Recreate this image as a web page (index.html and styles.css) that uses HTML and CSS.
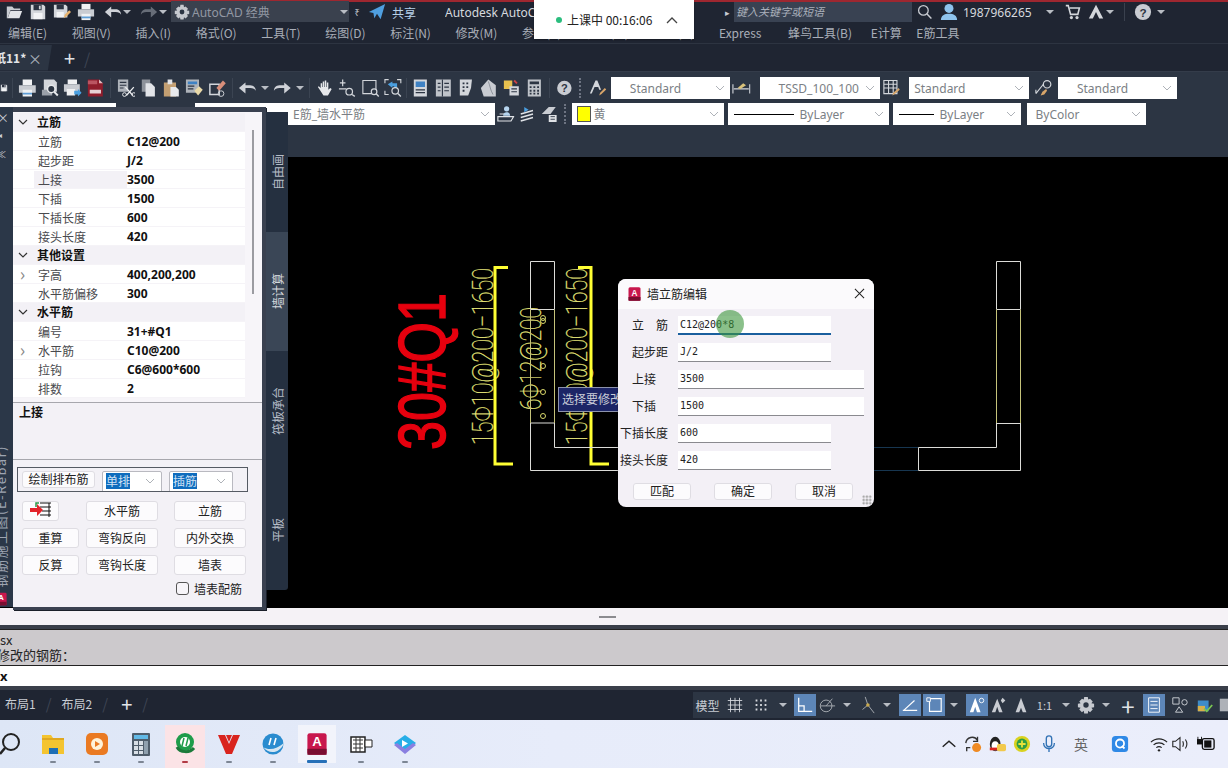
FILE: index.html
```html
<!DOCTYPE html>
<html lang="zh">
<head>
<meta charset="utf-8">
<title>AutoCAD</title>
<link rel="stylesheet" href="styles.css">
</head>
<body>
<svg class="defs" width="0" height="0" aria-hidden="true">
<defs>
<symbol id="open" viewBox="0 0 20 20"><path d="M2 4h6l2 2h7v2H6L3 17H2z" fill="#c9ccd2"/><path d="M6 9h13l-3 8H3z" fill="#e2e4e8"/></symbol>
<symbol id="save" viewBox="0 0 20 20"><path d="M2 2h14l2 2v14H2z" fill="#d3d6db"/><path d="M5 2h9v6H5z" fill="#2a3240"/><path d="M11 3h2v4h-2z" fill="#d3d6db"/><path d="M5 11h10v7H5z" fill="#f2f3f5"/></symbol>
<symbol id="saveas" viewBox="0 0 20 20"><path d="M1 2h13l2 2v12H1z" fill="#d3d6db"/><path d="M4 2h8v5H4z" fill="#2a3240"/><path d="M4 10h8v6H4z" fill="#f2f3f5"/><path d="M12 17l1-4 5-5 2 2-5 5z" fill="#e8b26c"/></symbol>
<symbol id="print" viewBox="0 0 20 20"><path d="M5 1h10v6H5z" fill="#f0f1f3"/><path d="M1 7h18v8H1z" fill="#c9ccd2"/><path d="M5 12h10v7H5z" fill="#f0f1f3"/><path d="M5 15h10v2H5z" fill="#5f9ed6"/></symbol>
<symbol id="preview" viewBox="0 0 20 20"><path d="M3 1h11l3 3v10H3z" fill="#d3d6db"/><path d="M1 12h11v6H1z" fill="#9aa0a9"/><circle cx="11" cy="11" r="4" fill="#2c3543" stroke="#e6e8eb" stroke-width="1.6"/><path d="M14 14l4 4" stroke="#e6e8eb" stroke-width="2"/></symbol>
<symbol id="plot" viewBox="0 0 20 20"><path d="M5 1h10v5H5z" fill="#f0f1f3"/><path d="M1 6h17v8H1z" fill="#c9ccd2"/><path d="M4 11h9v7H4z" fill="#f0f1f3"/><path d="M12 13h4v-2l4 4-4 4v-2h-4z" fill="#4a9fe0"/></symbol>
<symbol id="dwf" viewBox="0 0 20 20"><path d="M2 1h12l4 4v14H2z" fill="#8f1d2c"/><path d="M14 1l4 4h-4z" fill="#e6c3c8"/><path d="M2 2h10v4H2z" fill="#bb5562"/><path d="M4 12h12v4H4z" fill="#e8d2d5"/></symbol>
<symbol id="cut" viewBox="0 0 20 20"><path d="M1 1h11v13H1z" fill="#aeb3ba"/><path d="M3 4h7M3 7h7M3 10h4" stroke="#2c3543" stroke-width="1.2"/><path d="M9 9l8 9M18 9l-8 9" stroke="#eceef0" stroke-width="1.4"/><circle cx="8" cy="17" r="2" fill="none" stroke="#eceef0"/><circle cx="18" cy="17" r="2" fill="none" stroke="#eceef0"/></symbol>
<symbol id="copy" viewBox="0 0 20 20"><path d="M3 1h9v13H3z" fill="#8d929a"/><path d="M7 5h6l4 4v10H7z" fill="#e2e4e8"/></symbol>
<symbol id="paste" viewBox="0 0 20 20"><path d="M2 4h13v15H2z" fill="#c39f72"/><path d="M6 1h5v5H6z" fill="#e2e4e8"/><path d="M9 9h6l3 3v7H9z" fill="#e8eaed"/></symbol>
<symbol id="match" viewBox="0 0 20 20"><path d="M1 1h14v14H1z" fill="#aeb3ba"/><path d="M3 3h10v3H3z" fill="#3f82c4"/><path d="M3 8h7M3 11h6" stroke="#2c3543" stroke-width="1.2"/><path d="M10 13l5-5 4 4-5 6z" fill="#e9d9a8"/></symbol>
<symbol id="brush" viewBox="0 0 20 20"><path d="M2 6h10v11H2z" fill="none" stroke="#d3d6db" stroke-width="1.6"/><path d="M9 10l7-8 3 3-7 8z" fill="#d88e7a"/><circle cx="14" cy="16" r="3" fill="none" stroke="#d3d6db"/></symbol>
<symbol id="undo" viewBox="0 0 20 20"><path d="M1 10l7-6v3h5c4 0 6 3 6 6-1-2-3-3-6-3H8v6z" fill="#cfd2d8"/></symbol>
<symbol id="redo" viewBox="0 0 20 20"><path d="M19 10l-7-6v3H7c-4 0-6 3-6 6 1-2 3-3 6-3h5v6z" fill="#cfd2d8"/></symbol>
<symbol id="redod" viewBox="0 0 20 20"><path d="M19 10l-7-6v3H7c-4 0-6 3-6 6 1-2 3-3 6-3h5v6z" fill="#676d78"/></symbol>
<symbol id="pan" viewBox="0 0 20 20"><path d="M5 10V5h1.6v4h.6V3h1.6v6h.6V2h1.6v7h.6V4h1.6v8l2-2 1.6 1-4 7H8l-4-6-2-3 1-1z" fill="#e6e8eb"/></symbol>
<symbol id="zrt" viewBox="0 0 20 20"><path d="M5 1v7M2 4.500h6M1 11h8" stroke="#d3d6db" stroke-width="1.3"/><circle cx="12" cy="14" r="3.500" fill="none" stroke="#d3d6db" stroke-width="1.3"/><path d="M15 17l3 2" stroke="#d3d6db" stroke-width="1.5"/></symbol>
<symbol id="zwin" viewBox="0 0 20 20"><path d="M2 2h14v14H2z" fill="none" stroke="#d3d6db" stroke-width="1.2"/><circle cx="14" cy="14" r="3" fill="#2c3543" stroke="#d3d6db" stroke-width="1.3"/><path d="M16 16l3 3" stroke="#d3d6db" stroke-width="1.5"/></symbol>
<symbol id="zprev" viewBox="0 0 20 20"><path d="M1 5V1h4M14 1h4v4M1 13v4h4" fill="none" stroke="#d3d6db" stroke-width="1.2"/><path d="M4 6l5-3v2h5v5h-3V8H9v2z" fill="#4a9fe0"/><circle cx="12" cy="13" r="3.500" fill="#2c3543" stroke="#d3d6db" stroke-width="1.3"/><path d="M15 16l3 3" stroke="#d3d6db" stroke-width="1.5"/></symbol>
<symbol id="props" viewBox="0 0 20 20"><path d="M3 1h14v18H3z" fill="#d3d6db"/><path d="M5 3h10v6H5z" fill="#3f82c4"/><path d="M5 12h10M5 15h10" stroke="#2c3543" stroke-width="1.3"/></symbol>
<symbol id="design" viewBox="0 0 20 20"><path d="M2 1h16v18H2z" fill="#bfc3c9"/><path d="M9 1v18M4 5h3M4 9h3M4 13h3M11 5h5M11 9h5M11 13h5" stroke="#2c3543" stroke-width="1.2"/></symbol>
<symbol id="palette" viewBox="0 0 20 20"><path d="M3 1h13l-1 9-3 8H3z" fill="#d3d6db"/><path d="M6 4h2v2H6zM10 4h2v2h-2zM6 8h2v2H6zM10 8h2v2h-2zM6 12h2v2H6z" fill="#2c3543"/></symbol>
<symbol id="sheet" viewBox="0 0 20 20"><path d="M2 10L10 1l8 6v12H5z" fill="#c9ccd2"/><path d="M10 3c2 5 2 9 5 14" stroke="#8a8f97" fill="none"/></symbol>
<symbol id="markup" viewBox="0 0 20 20"><path d="M2 2h9v9H2z" fill="#e8c24f"/><path d="M8 8h10v10H8z" fill="#d3d6db"/><path d="M10 11h6M10 14h6" stroke="#2c3543" stroke-width="1.3"/><path d="M13 2l3 3" stroke="#c44" stroke-width="2"/></symbol>
<symbol id="calc" viewBox="0 0 20 20"><path d="M3 1h14v18H3z" fill="#bfc3c9"/><path d="M5 3h10v3H5z" fill="#2c3543"/><path d="M5 8h2v2H5zM9 8h2v2H9zM13 8h2v2h-2zM5 12h2v2H5zM9 12h2v2H9zM13 12h2v2h-2zM5 15h2v2H5zM9 15h2v2H9zM13 15h2v2h-2z" fill="#2c3543"/></symbol>
<symbol id="texta" viewBox="0 0 20 20"><path d="M2 16L8 2h2l4 10h-2l-1-3H7l-3 7z" fill="#d3d6db"/><path d="M12 18l1-3 5-5 1.500 1.500-5 5z" fill="#d9a66a"/></symbol>
<symbol id="dim" viewBox="0 0 20 20"><path d="M1 6v10M19 6v10M2 11h16" stroke="#d3d6db" stroke-width="1.2"/><path d="M6 10l6-5 3 2-6 4z" fill="#d9c27a"/></symbol>
<symbol id="table" viewBox="0 0 20 20"><path d="M2 2h14v14H2zM2 6h14M2 10h14M7 2v14M12 2v14" fill="none" stroke="#d3d6db" stroke-width="1.2"/><path d="M11 18l1-3 6-5 1 2-6 5z" fill="#d9a66a"/></symbol>
<symbol id="lead" viewBox="0 0 20 20"><circle cx="14" cy="6" r="4" fill="none" stroke="#d3d6db" stroke-width="1.3"/><path d="M10 6L2 16M2 16v-4" stroke="#d3d6db" stroke-width="1.2" fill="none"/><path d="M7 18l2-4 4-3 1 2-3 4z" fill="#d9a66a"/></symbol>
<symbol id="lay1" viewBox="0 0 20 20"><circle cx="11" cy="4" r="3" fill="#b6d4ee"/><path d="M7 12c0-3 2-4 4-4s4 1 4 4z" fill="#b6d4ee"/><path d="M1 13h18l-3 5H1zM3 10h5" stroke="#dfe2e6" fill="none" stroke-width="1.3"/></symbol>
<symbol id="lay2" viewBox="0 0 20 20"><path d="M2 14l14-4M2 18l14-4M2 10l14-4" stroke="#dfe2e6" stroke-width="1.6"/><path d="M6 2l5 3-5 3z" fill="#4a9fe0"/></symbol>
<symbol id="lay3" viewBox="0 0 20 20"><path d="M2 10l8-8h8l-6 8z" fill="#c9ccd2"/><path d="M10 11h9v8h-9z" fill="#dfe2e6"/><path d="M12 13h5M12 16h5" stroke="#2c3543"/></symbol>
<symbol id="chev" viewBox="0 0 10 6"><path d="M1 1l4 4 4-4" fill="none" stroke="#aeb2b8" stroke-width="1"/></symbol>
<symbol id="chevd" viewBox="0 0 10 6"><path d="M1 1l4 4 4-4" fill="none" stroke="#333" stroke-width="1.200"/></symbol>
<symbol id="tri" viewBox="0 0 8 8"><path d="M0 2h8L4 6z" fill="#b9bdc4"/></symbol>
<symbol id="gear" viewBox="0 0 20 20"><path d="M8 1h4l.5 3 2-1 3 3-1.500 2 3 .5v4l-3 .5 1.500 2-3 3-2-1.500-.5 3H8l-.5-3-2 1.500-3-3 1.500-2-3-.5V8.500l3-.5L2.500 6l3-3 2 1z" fill="#c6c9cf"/><circle cx="10" cy="10" r="3" fill="#2c3543"/></symbol>
<symbol id="cad" viewBox="0 0 20 20"><rect x="2" y="1" width="16" height="18" rx="2" fill="#c8174d"/><rect x="2" y="14" width="16" height="5" fill="#7a0e30"/><text x="10" y="12" text-anchor="middle" font-size="11" font-weight="700" fill="#fff" font-family="Liberation Sans">A</text></symbol>
</defs>
</svg>

<div class="app">
  <header class="titlebar">
    <svg class="ic17 m-open"><use href="#open"/></svg>
    <svg class="ic17"><use href="#save"/></svg>
    <svg class="ic17"><use href="#saveas"/></svg>
    <svg class="ic17"><use href="#print"/></svg>
    <svg class="ic17 m-undo"><use href="#undo"/></svg><svg class="tri"><use href="#tri"/></svg>
    <svg class="ic17 m-redo"><use href="#redod"/></svg><svg class="tri"><use href="#tri"/></svg>
    <div class="wsp"><svg class="ic15"><use href="#gear"/></svg><span>AutoCAD 经典</span><svg class="tri wsp-tri"><use href="#tri"/></svg></div>
    <span class="cust">₹</span>
    <svg class="ic17 share" viewBox="0 0 20 20"><path d="M1 10L19 1l-5 17-4-6-3 5-1-6z" fill="#4f9fe0"/></svg>
    <span class="share-t">共享</span>
    <span class="app-name">Autodesk AutoCAD</span>
    <span class="ti-arrow">▸</span>
    <div class="searchbox">键入关键字或短语</div>
    <svg class="ic15 mag" viewBox="0 0 20 20"><circle cx="8" cy="8" r="6" fill="none" stroke="#c9ccd2" stroke-width="1.600"/><path d="M12.500 12.500L18 18" stroke="#c9ccd2" stroke-width="1.800"/></svg>
    <svg class="ic17 person" viewBox="0 0 20 20"><circle cx="10" cy="6" r="5" fill="#8ec4ee"/><path d="M1 19c0-5 4-7 9-7s9 2 9 7z" fill="#8ec4ee"/></svg>
    <span class="user">1987966265</span>
    <svg class="tri m-t1"><use href="#tri"/></svg>
    <svg class="ic15 cart" viewBox="0 0 20 20"><path d="M1 2h3l3 11h9l2-8H6" fill="none" stroke="#d3d6db" stroke-width="2"/><circle cx="8" cy="17" r="2" fill="#d3d6db"/><circle cx="15" cy="17" r="2" fill="#d3d6db"/></svg>
    <svg class="ic15 a360" viewBox="0 0 20 20"><path d="M10 1L1 18h5l4-8 4 8h5z" fill="#d3d6db"/></svg>
    <svg class="tri"><use href="#tri"/></svg>
    <i class="vsep"></i>
    <svg class="ic17 helpi" viewBox="0 0 20 20"><circle cx="10" cy="10" r="9" fill="#c9ccd2"/><text x="10" y="15" font-size="13" text-anchor="middle" font-weight="700" fill="#2c3543" font-family="Liberation Sans">?</text></svg>
    <svg class="tri"><use href="#tri"/></svg>
  </header>

  <nav class="menubar">
    <span>编辑(E)</span><span>视图(V)</span><span>插入(I)</span><span>格式(O)</span><span>工具(T)</span><span>绘图(D)</span><span>标注(N)</span><span>修改(M)</span><span>参数(P)</span><span>窗口(W)</span><span>帮助(H)</span><span>Express</span><span class="mn-a">蜂鸟工具(B)</span><span class="mn-b">E计算</span><span class="mn-c">E筋工具</span>
  </nav>

  <div class="tabbar">
    <div class="tab"><span class="tab-name">纸11*</span><span class="tab-x">×</span></div>
    <span class="tab-plus">+</span>
    <span class="tab-sl">/</span>
  </div>

  <div class="tools">
    <div class="tb tb1">
      <svg class="ti clip"><use href="#save"/></svg><i class="sep"></i>
      <svg class="ti"><use href="#print"/></svg><svg class="ti"><use href="#preview"/></svg><svg class="ti"><use href="#plot"/></svg><svg class="ti"><use href="#dwf"/></svg><i class="sep"></i>
      <svg class="ti"><use href="#cut"/></svg><svg class="ti"><use href="#copy"/></svg><svg class="ti"><use href="#paste"/></svg><svg class="ti"><use href="#match"/></svg><svg class="ti"><use href="#brush"/></svg><i class="sep"></i>
      <svg class="ti"><use href="#undo"/></svg><svg class="tri"><use href="#tri"/></svg><svg class="ti"><use href="#redo"/></svg><svg class="tri"><use href="#tri"/></svg><i class="sep"></i>
      <svg class="ti"><use href="#pan"/></svg><svg class="ti"><use href="#zrt"/></svg><svg class="ti"><use href="#zwin"/></svg><svg class="ti"><use href="#zprev"/></svg><i class="sep sep-n"></i>
      <svg class="ti"><use href="#props"/></svg><svg class="ti"><use href="#design"/></svg><svg class="ti"><use href="#palette"/></svg><svg class="ti"><use href="#sheet"/></svg><svg class="ti"><use href="#markup"/></svg><svg class="ti"><use href="#calc"/></svg><i class="sep"></i>
      <svg class="ti" viewBox="0 0 22 22"><circle cx="11" cy="11" r="8.500" fill="#c9ccd2"/><text x="11" y="16" font-size="13" text-anchor="middle" font-weight="700" fill="#2c3543" font-family="Liberation Sans">?</text></svg><i class="grip"></i>
      <svg class="ti"><use href="#texta"/></svg>
      <div class="combo c-a"><span>Standard</span><svg class="chev"><use href="#chev"/></svg></div>
      <svg class="ti"><use href="#dim"/></svg>
      <div class="combo c-b"><span>TSSD_100_100</span><svg class="chev"><use href="#chev"/></svg></div>
      <svg class="ti"><use href="#table"/></svg>
      <div class="combo c-c"><span>Standard</span><svg class="chev"><use href="#chev"/></svg></div>
      <svg class="ti t-gap2"><use href="#lead"/></svg>
      <div class="combo c-d"><span>Standard</span><svg class="chev"><use href="#chev"/></svg></div>
    </div>
    <div class="tb tb2">
      <div class="combo c-e"></div>
      <div class="combo c-f"><span>E筋_墙水平筋</span><svg class="chev"><use href="#chev"/></svg></div>
      <svg class="ti"><use href="#lay1"/></svg><svg class="ti"><use href="#lay2"/></svg><svg class="ti"><use href="#lay3"/></svg><i class="grip"></i>
      <div class="combo c-g"><i class="swatch"></i><span>黄</span><svg class="chev"><use href="#chev"/></svg></div>
      <div class="combo c-h"><i class="line l1"></i><span>ByLayer</span><svg class="chev"><use href="#chev"/></svg></div>
      <div class="combo c-i"><i class="line l2"></i><span>ByLayer</span><svg class="chev"><use href="#chev"/></svg></div>
      <div class="combo c-j"><span>ByColor</span><svg class="chev"><use href="#chev"/></svg></div>
    </div>
  </div>

  <main class="canvas">
    <svg class="drawing" viewBox="0 157 1228 451" width="1228" height="451">
      <text class="red" transform="translate(445 450) rotate(-90)" textLength="157" lengthAdjust="spacingAndGlyphs">30#Q1</text>
      <g class="ytext">
        <text transform="translate(493 445) rotate(-90)" textLength="177" lengthAdjust="spacingAndGlyphs">15Φ10@200−1650</text>
        <text transform="translate(587 445) rotate(-90)" textLength="177" lengthAdjust="spacingAndGlyphs">15Φ10@200−1650</text>
        <text transform="translate(541 410) rotate(-90)" textLength="103" lengthAdjust="spacingAndGlyphs">6Φ12@200</text>
      </g>
      <g class="ycirc">
        <circle cx="543" cy="416" r="2.500"/><circle cx="543" cy="392" r="2.500"/><circle cx="543" cy="366" r="2.500"/><circle cx="543" cy="318" r="2.500"/><circle cx="543" cy="321" r="2.500"/>
      </g>
      <g class="ybr">
        <path d="M508 267.500h-13v196.500h18"/>
        <path d="M578 267.500h13v196.500h18"/>
      </g>
      <g class="wl">
        <path d="M530.500 261.500h24v48h-24zM530.500 423v47.500H618M554.500 423v24.500H618M530.500 423h24"/>
        <path d="M996.500 261.500h24v48h-24zM1020.500 423v47.500H918.500v-23h78v-24.500M996.500 423.500h24"/>
      </g>
      <g class="yl"><path d="M530.500 309.500V423M554.500 309.500V423M996.500 309.500V423M1020.500 309.500V423"/></g>
      <g class="bl"><path d="M874 447.500h44M874 470.500h44"/></g>
    </svg>
    <div class="cad-tip">选择要修改的钢筋</div>
  </main>

  <div class="splitter"><i></i></div>

  <section class="cmd">
    <div class="cmd-hist"><div>sx</div><div class="cmd-l2">修改的钢筋：</div></div>
    <div class="cmd-in">x</div>
  </section>

  <footer class="status">
    <div class="layouts">
      <span>布局1</span><i>/</i><span>布局2</span><i>/</i><b>+</b><i>/</i>
    </div>
    <div class="st-tools">
      <span class="st st-model">模型</span>
      <span class="st st-w"><svg class="sv" viewBox="0 0 20 20"><path d="M5 2v16M10 2v16M15 2v16M2 5h16M2 10h16M2 15h16" stroke="#d3d6db" fill="none"/></svg></span>
      <span class="st st-w"><svg class="sv" viewBox="0 0 20 20"><path d="M4 4h2v2H4zM9 4h2v2H9zM14 4h2v2h-2zM4 9h2v2H4zM9 9h2v2H9zM14 9h2v2h-2zM4 14h2v2H4zM9 14h2v2H9zM14 14h2v2h-2z" fill="#d3d6db"/></svg></span><svg class="tri"><use href="#tri"/></svg>
      <span class="st on st-g2"><svg class="sv" viewBox="0 0 20 20"><path d="M3 2v15h15M3 11h6v6" stroke="#fff" stroke-width="1.400" fill="none"/></svg></span>
      <span class="st"><svg class="sv" viewBox="0 0 20 20"><circle cx="9" cy="11" r="6.500" stroke="#aeb2b8" fill="none"/><path d="M3 11h16M9 11l7-8" stroke="#aeb2b8" fill="none"/></svg></span><svg class="tri"><use href="#tri"/></svg>
      <span class="st"><svg class="sv" viewBox="0 0 20 20"><path d="M8 1l3 9 7 9M11 10l-6 5" stroke="#aeb2b8" fill="none"/><circle cx="11" cy="10" r="2" fill="#c9a94f"/></svg></span><svg class="tri"><use href="#tri"/></svg>
      <span class="st on st-g3"><svg class="sv" viewBox="0 0 20 20"><path d="M2 16h16M3 16L15 5" stroke="#fff" stroke-width="1.300" fill="none"/></svg></span>
      <span class="st on st-g2"><svg class="sv" viewBox="0 0 20 20"><path d="M5 3h13v14H5z" stroke="#fff" fill="none" stroke-width="1.300"/><path d="M2 2h4v4H2z" fill="#5d86b8" stroke="#fff"/></svg></span><svg class="tri"><use href="#tri"/></svg>
      <span class="st on st-g3"><svg class="sv" viewBox="0 0 20 20"><path d="M8 2L2 18h4l2-6 2 6h4z" fill="#fff"/><circle cx="15" cy="5" r="2.500" fill="none" stroke="#fff"/></svg></span>
      <span class="st"><svg class="sv" viewBox="0 0 20 20"><path d="M8 3L2 18h4l2-6 2 6h4z" fill="#c9ccd2"/><path d="M14 2l3 3-3 3-2-3z" fill="#c9ccd2"/></svg></span>
      <span class="st"><svg class="sv" viewBox="0 0 20 20"><path d="M10 2L4 18h4l2-5 2 5h4z" fill="#c9ccd2"/></svg></span>
      <span class="st st-scale">1:1</span><svg class="tri"><use href="#tri"/></svg>
      <span class="st"><svg class="sv"><use href="#gear"/></svg></span><svg class="tri"><use href="#tri"/></svg>
      <span class="st st-plus">+</span>
      <span class="st on st-g2"><svg class="sv" viewBox="0 0 20 20"><path d="M4 2h12v16H4z" stroke="#fff" fill="none"/><path d="M6 6h8M6 10h8M6 14h8" stroke="#fff"/></svg></span>
      <span class="st st-g4"><svg class="sv" viewBox="0 0 20 20"><path d="M2 2h7v7H2z" stroke="#d3d6db" fill="none"/><circle cx="15" cy="7" r="3" stroke="#d3d6db" fill="none"/><path d="M9 12l4 6H5z" stroke="#d3d6db" fill="none"/></svg></span>
      <span class="st st-g3"><svg class="sv" viewBox="0 0 20 20"><path d="M2 5h12v12H2z" fill="#3e8cc8"/><path d="M2 11h8v6H2z" fill="#d8b04a"/><path d="M9 14l3 3 6-7" stroke="#7ac552" stroke-width="2" fill="none"/></svg></span>
      <span class="st"><svg class="sv" viewBox="0 0 20 20"><path d="M2 3h16v14H2z" fill="#aeb2b8"/></svg></span>
    </div>
  </footer>

  <div class="taskbar">
    <svg class="tk" viewBox="0 0 24 24"><circle cx="12" cy="10" r="8" fill="none" stroke="#222" stroke-width="2"/><path d="M6 16l-5 6" stroke="#222" stroke-width="2.500"/></svg>
    <span class="tk-i"><svg class="tk" viewBox="0 0 24 24"><path d="M1 3h9l2 3h11v16H1z" fill="#f4c430"/><path d="M1 6h22v2H1z" fill="#e0a820"/><path d="M8 16h9v6H8z" fill="#1f6fb5"/></svg></span>
    <span class="tk-i"><svg class="tk" viewBox="0 0 24 24"><rect x="1" y="1" width="22" height="22" rx="5" fill="#ea7a22"/><circle cx="12" cy="12" r="6" fill="#fff2d8"/><path d="M10 9l5 3-5 3z" fill="#ea7a22"/></svg></span>
    <span class="tk-i"><svg class="tk" viewBox="0 0 24 24"><rect x="3" y="1" width="18" height="23" rx="1" fill="#4f5d6b"/><rect x="5" y="3" width="14" height="4" fill="#62b9e6"/><path d="M5 9h4v4H5zM10 9h4v4h-4zM5 14h4v4H5zM10 14h4v4h-4zM5 19h4v3H5zM10 19h4v3h-4z" fill="#d8dfe6"/><path d="M15 9h4v13h-4z" fill="#8fa0ae"/></svg></span>
    <span class="tk-i pink"><svg class="tk" viewBox="0 0 24 24"><circle cx="12" cy="10" r="9" fill="#1e9c4a"/><circle cx="12" cy="10" r="5" fill="#fff"/><path d="M11 6l-2 8M15 6l-2 8" stroke="#1e9c4a" stroke-width="1.500"/><path d="M4 15c3 6 13 6 17 1" stroke="#1b7a3a" stroke-width="3" fill="none"/></svg></span>
    <span class="tk-i"><svg class="tk" viewBox="0 0 24 24"><path d="M1 3h7l4 9 4-9h7l-8 19h-6z" fill="#d9241e"/><path d="M9 3h6l-3 7z" fill="#d9241e"/></svg></span>
    <span class="tk-i"><svg class="tk" viewBox="0 0 24 24"><circle cx="12" cy="12" r="10.500" fill="#2a8ccf"/><path d="M2 15c6 4 14 2 21-4-3 9-14 13-21 4z" fill="#d5e6f2"/><path d="M10 6l-2 7M15 6l-2 7" stroke="#fff" stroke-width="1.600"/></svg></span>
    <span class="tk-i active"><svg class="tk" viewBox="0 0 20 20"><use href="#cad"/></svg></span>
    <span class="tk-i"><svg class="tk" viewBox="0 0 24 24"><path d="M2 5h14v15H2z" fill="#fff" stroke="#222" stroke-width="1.500"/><path d="M4 8h10M4 12h10M4 16h10M7 5v15M11 5v15" stroke="#333"/><path d="M16 8h7v7h-7z" fill="#fff" stroke="#222"/></svg></span>
    <span class="tk-i"><svg class="tk" viewBox="0 0 24 24"><path d="M12 3l11 8-11 9L1 11z" fill="#27aee8"/><path d="M1 13l11 9 11-9-3-2-8 6-8-6z" fill="#8a7fe0"/><path d="M9 8l6 3.500L9 15z" fill="#fff"/></svg></span>
    <div class="tray">
      <svg class="tr t1" viewBox="0 0 20 20"><path d="M3 13l7-6 7 6" fill="none" stroke="#222" stroke-width="1.600"/></svg>
      <svg class="tr t2" viewBox="0 0 20 20"><path d="M2 9a7 7 0 0 1 13-3M15 2v5h-5M3 18v-4h4" fill="none" stroke="#333" stroke-width="1.500"/><circle cx="14" cy="14" r="5" fill="#ef8a23"/></svg>
      <svg class="tr t3" viewBox="0 0 20 20"><ellipse cx="8" cy="10" rx="6" ry="8" fill="#222"/><ellipse cx="8" cy="12" rx="4" ry="5" fill="#fff"/><path d="M2 14h12v3H2z" fill="#d9241e"/><rect x="10" y="10" width="10" height="8" rx="2" fill="#f2c94c"/></svg>
      <svg class="tr t4" viewBox="0 0 20 20"><circle cx="10" cy="10" r="9" fill="#d9d21f"/><circle cx="10" cy="10" r="6" fill="#2f9e44"/><path d="M10 6v8M6 10h8" stroke="#e8e23a" stroke-width="2"/></svg>
      <svg class="tr t5" viewBox="0 0 20 20"><rect x="7" y="1" width="6" height="12" rx="3" fill="none" stroke="#3272b5" stroke-width="1.500"/><path d="M4 9c0 8 12 8 12 0M10 15v4" fill="none" stroke="#3272b5" stroke-width="1.500"/></svg>
      <span class="tr-t">英</span>
      <svg class="tr t7" viewBox="0 0 20 20"><rect x="1" y="1" width="18" height="18" rx="4" fill="#2f89e6"/><circle cx="10" cy="9.500" r="4.500" fill="none" stroke="#fff" stroke-width="2"/><path d="M12 12l3 3" stroke="#fff" stroke-width="2"/></svg>
      <svg class="tr t8" viewBox="0 0 20 20"><path d="M1 8c5-5 13-5 18 0M4 11c3-3 9-3 12 0M7 14c2-1.500 4-1.500 6 0" fill="none" stroke="#222" stroke-width="1.300"/><circle cx="10" cy="17" r="1.300" fill="#222"/></svg>
      <svg class="tr t9" viewBox="0 0 20 20"><path d="M2 7h3l5-4v14l-5-4H2z" fill="none" stroke="#222" stroke-width="1.200"/><path d="M13 7c1 2 1 4 0 6M16 5c2 3 2 7 0 10" fill="none" stroke="#222" stroke-width="1.200"/></svg>
      <svg class="tr t10" viewBox="0 0 20 20"><path d="M1 2v3M5 2v3M0 5h6v5H0z" fill="#111" stroke="#111"/><rect x="6" y="4" width="13" height="12" rx="2" fill="none" stroke="#111" stroke-width="1.500"/><rect x="8" y="6" width="8" height="8" fill="#111"/></svg>
    </div>
  </div>

  <aside class="palette">
    <div class="pal-strip">
      <span class="pal-x">×</span><span class="pal-a">◂</span><span class="pal-d">≪</span>
      <span class="pal-title">钢筋施工图(E-Rebar)</span>
      <svg class="pal-logo" viewBox="0 0 20 20"><use href="#cad"/></svg>
    </div>
    <div class="pal-body">
      <div class="pal-rows">
        <div class="r grp"><svg class="ex"><use href="#chevd"/></svg><b>立筋</b></div>
        <div class="r"><span></span><span>立筋</span><b>C12@200</b></div>
        <div class="r"><span></span><span>起步距</span><b>J/2</b></div>
        <div class="r sel"><span></span><span>上接</span><b>3500</b></div>
        <div class="r"><span></span><span>下插</span><b>1500</b></div>
        <div class="r"><span></span><span>下插长度</span><b>600</b></div>
        <div class="r"><span></span><span>接头长度</span><b>420</b></div>
        <div class="r grp"><svg class="ex"><use href="#chevd"/></svg><b>其他设置</b></div>
        <div class="r"><span class="ex2">›</span><span>字高</span><b>400,200,200</b></div>
        <div class="r"><span></span><span>水平筋偏移</span><b>300</b></div>
        <div class="r grp"><svg class="ex"><use href="#chevd"/></svg><b>水平筋</b></div>
        <div class="r"><span></span><span>编号</span><b>31+#Q1</b></div>
        <div class="r"><span class="ex2">›</span><span>水平筋</span><b>C10@200</b></div>
        <div class="r"><span></span><span>拉钩</span><b>C6@600*600</b></div>
        <div class="r"><span></span><span>排数</span><b>2</b></div>
        <i class="pal-scroll"></i>
      </div>
      <div class="pal-desc"><b>上接</b></div>
      <div class="pal-ctl">
        <div class="ctl-box">
          <button class="btn b-draw">绘制排布筋</button>
          <div class="sel-box s1"><em>单排</em><svg class="chev"><use href="#chev"/></svg></div>
          <div class="sel-box s2"><em>插筋</em><svg class="chev"><use href="#chev"/></svg></div>
        </div>
        <div class="btn-grid">
          <button class="btn b-ico"><svg width="22" height="18" viewBox="0 0 22 18"><path d="M10 2h11M10 6h11M12 10h9M10 14h11M19 2v14" stroke="#111" fill="none"/><path d="M9 2H6v4" stroke="#2a9a4a" stroke-width="1.500" fill="none"/><path d="M0 7h7V3l6 6-6 6v-4H0z" fill="#e3242b"/></svg></button>
          <button class="btn">水平筋</button><button class="btn">立筋</button>
          <button class="btn">重算</button><button class="btn">弯钩反向</button><button class="btn">内外交换</button>
          <button class="btn">反算</button><button class="btn">弯钩长度</button><button class="btn">墙表</button>
        </div>
        <label class="chk"><i></i><span>墙表配筋</span></label>
      </div>
    </div>
    <div class="pal-tabs">
      <div class="pt"><span>自由画</span></div>
      <div class="pt cur"><span>墙计算</span></div>
      <div class="pt"><span>筏板承台</span></div>
      <div class="pt"><span>平板</span></div>
    </div>
  </aside>

  <div class="dlg">
    <div class="dlg-title">
      <svg class="dlg-logo" viewBox="0 0 20 20"><use href="#cad"/></svg>
      <span>墙立筋编辑</span>
      <svg class="dlg-x" viewBox="0 0 12 12"><path d="M1 1l10 10M11 1L1 11" stroke="#222" stroke-width="1.100"/></svg>
    </div>
    <div class="dlg-form">
      <div class="f"><label class="spread"><span>立</span><span>筋</span></label><div class="inp focus">C12@200*8</div></div>
      <div class="f"><label>起步距</label><div class="inp">J/2</div></div>
      <div class="f"><label>上接</label><div class="inp wide">3500</div></div>
      <div class="f"><label>下插</label><div class="inp wide">1500</div></div>
      <div class="f"><label class="lng">下插长度</label><div class="inp">600</div></div>
      <div class="f"><label class="lng">接头长度</label><div class="inp">420</div></div>
    </div>
    <div class="dlg-btns"><button class="btn">匹配</button><button class="btn">确定</button><button class="btn">取消</button></div>
    <i class="dlg-grip"></i>
    <i class="cursor"></i>
  </div>

  <div class="live">
    <i class="dot"></i><span>上课中 00:16:06</span>
    <svg class="up" viewBox="0 0 12 8"><path d="M1 7l5-5 5 5" fill="none" stroke="#444" stroke-width="1.300"/></svg>
  </div>
</div>
</body>
</html>
```
FILE: styles.css
```css
* { box-sizing: border-box; }
html, body { margin: 0; padding: 0; background: #000; }
body { font-family: "Noto Sans CJK SC", "Noto Sans", sans-serif; font-size: 12px; }
.defs { position: absolute; }
svg { display: block; flex: none; }
.app { position: relative; width: 1228px; height: 768px; overflow: hidden; display: flex; flex-direction: column; background: #1f2532; }

.titlebar { height: 22px; flex: none; display: flex; align-items: center; background: #1f2532; border-top: 2px solid #9e2730; color: #c8ccd3; }
.ic17 { width: 18px; height: 18px; margin-right: 6px; }
.ic15 { width: 16px; height: 16px; }
.tri { width: 8px; height: 8px; }
.m-open { margin-left: 5px; }
.m-undo { margin-left: 3px; margin-right: 1px; }
.m-redo { margin-left: 9px; margin-right: 1px; }
.wsp { width: 178px; height: 22px; margin-left: 4px; background: #3a414e; display: flex; align-items: center; padding-left: 3px; color: #9298a3; font-size: 12px; font-family: "Noto Sans", "Noto Sans CJK SC", sans-serif; gap: 2px; }
.wsp-tri { margin-left: auto; margin-right: 1px; }
.cust { width: 14px; margin-left: 1px; font-size: 9px; color: #c8ccd3; text-align: center; }
.share { margin: 0 0 0 4px; }
.share-t { margin-left: 6px; width: 30px; font-size: 12px; color: #b8d2ea; }
.app-name { margin-left: 23px; width: 90px; white-space: nowrap; overflow: hidden; color: #d6d9de; font-family: "Noto Sans", sans-serif; font-size: 12px; }
.ti-arrow { margin-left: 190px; font-size: 9px; color: #c8ccd3; width: 9px; }
.searchbox { width: 178px; height: 20px; background: #394252; font-style: italic; color: #aab0bb; font-size: 11px; line-height: 18px; padding-left: 2px; }
.mag { margin-left: 5px; }
.person { margin: 0 0 0 7px; }
.user { margin-left: 5px; width: 83px; font-family: "Noto Sans", sans-serif; font-size: 12px; color: #d6d9de; }
.cart { margin-left: 11px; }
.a360 { margin-left: 7px; margin-right: 2px; }
.vsep { width: 1px; height: 18px; background: #3a414e; margin: 0 9px 0 10px; }
.helpi { margin-right: 5px; }

.menubar { height: 22px; flex: none; display: flex; align-items: center; padding-left: 8px; gap: 24.6px; background: #1f2532; border-bottom: 1px solid #2d3441; color: #a9aeb8; font-size: 12px; white-space: nowrap; }
.mn-a { margin-left: 2px; }
.mn-b { margin-left: -6px; }
.mn-c { margin-left: -10px; }

.tabbar { height: 27px; flex: none; display: flex; align-items: center; background: #1f2532; }
.tab { width: 52px; height: 26px; background: #2c3543; display: flex; align-items: center; justify-content: space-between; padding: 0 5px 0 0; clip-path: polygon(0 0, 100% 0, 92% 100%, 0 100%); color: #e3e5e9; font-weight: 700; }
.tab-name { margin-left: -6px; }
.tab-x { color: #aab0bb; font-weight: 400; font-size: 14px; padding-right: 5px; }
.tab-plus { margin-left: 12px; font-size: 20px; color: #dfe2e6; line-height: 1; }
.tab-sl { margin-left: 9px; color: #3d4452; font-size: 16px; }

.tools { flex: none; height: 86px; background: #2c3543; padding-top: 3px; border-top: 1px solid #343c4a; }
.tb { height: 26px; display: flex; align-items: center; }
.ti { width: 22.7px; height: 22px; padding: 1px 2px; }
.clip { width: 8px; padding: 1px 0; overflow: hidden; }
.tb1 .tri { margin: 0 2px; }
.sep { width: 8px; height: 20px; flex: none; background: linear-gradient(#3b4452, #3b4452) center / 1px 100% no-repeat; }
.sep-n { width: 5px; }
.grip { width: 5px; height: 20px; margin: 0 2px 0 3px; flex: none; border-left: 2px dotted #6d7482; }
.tb2 .grip { margin: 0 4px; width: 4px; }
.tb2 .ti { width: 21.5px; }
.chev { width: 10px; height: 6px; margin-left: auto; }
.combo { height: 22px; background: #fff; display: flex; align-items: center; color: #7b7f85; font-size: 12px; font-family: "Noto Sans", "Noto Sans CJK SC", sans-serif; padding-right: 5px; flex: none; overflow: hidden; white-space: nowrap; }
.c-a { width: 119px; padding-left: 19px; margin-left: 2px; }
.c-b { width: 120px; padding-left: 19px; margin-left: 7px; }
.c-c { width: 120px; padding-left: 5px; margin-left: 7px; }
.c-d { width: 119px; padding-left: 19px; }
.t-gap2 { margin-left: 3px; margin-right: 3px; }
.c-e { width: 116px; }
.c-f { width: 300px; margin-left: 79px; padding-left: 98px; }
.c-g { width: 152px; padding-left: 5px; gap: 3px; }
.c-h { width: 161px; margin-left: 4px; padding-left: 6px; gap: 6px; }
.c-i { width: 128px; margin-left: 4px; padding-left: 6px; gap: 6px; }
.c-j { width: 119px; margin-left: 6px; padding-left: 9px; }
.swatch { width: 14px; height: 16px; background: #ff0; border: 1px solid #555; }
.line { height: 1px; background: #000; display: block; }
.l1 { width: 60px; }
.l2 { width: 35px; }

.canvas { position: relative; flex: none; height: 451px; background: #000; }
.drawing { display: block; }
.red { font: 400 66px "Liberation Sans", sans-serif; fill: #e6000e; stroke: #e6000e; stroke-width: 1.5px; }
.ytext text { font: 100 30px "Roboto", "Lato", sans-serif; fill: #e8e87c; stroke: #e8e87c; stroke-width: .3px; }
.ycirc circle { fill: none; stroke: #d9d96c; }
.ybr path { fill: none; stroke: #ffff33; stroke-width: 3; }
.wl path { fill: none; stroke: #dcdcd8; stroke-width: 1; }
.yl path { fill: none; stroke: #c5c27a; stroke-width: 1; }
.bl path { fill: none; stroke: #173650; stroke-width: 1; }
.cad-tip { position: absolute; left: 558px; top: 230px; width: 62px; height: 25px; background: #1c2566; border: 1px solid #8d93ac; color: #c9cdd8; font-size: 12px; line-height: 21px; padding-left: 3px; overflow: hidden; white-space: nowrap; }

.splitter { flex: none; height: 17px; background: #f5f2f6; display: flex; align-items: center; justify-content: center; padding-right: 14px; }
.splitter i { width: 17px; height: 2px; background: #8b8b8f; margin-top: 1px; }

.cmd { flex: none; height: 65px; background: #3a3f4a; padding-top: 4px; }
.cmd-hist { height: 37px; background: #ccc9cc; border-top: 1px solid #222; border-bottom: 1px solid #222; color: #222; font-size: 13px; line-height: 15px; padding-top: 2px; overflow: hidden; white-space: nowrap; }
.cmd-hist div { height: 15px; }
.cmd-l2 { margin-left: -3px; }
.cmd-in { height: 20px; background: #fff; color: #111; font-weight: 700; font-size: 13px; line-height: 20px; font-family: "Noto Sans", sans-serif; }

.status { flex: none; height: 30px; display: flex; align-items: center; background: #1f2532; color: #c8ccd3; }
.layouts { display: flex; align-items: center; padding: 0 0 3px 5px; gap: 10px; font-size: 12px; }
.layouts i { color: #3d4452; font-style: normal; font-size: 15px; }
.layouts b { font-size: 20px; line-height: 1; font-weight: 400; color: #e3e5e9; margin-left: 3px; }
.st-tools { margin-left: auto; width: 535px; height: 26px; display: flex; align-items: center; overflow: hidden; background: #2c3543; }
.st { height: 22px; width: 22px; flex: none; display: flex; align-items: center; justify-content: center; font-size: 12px; }
.st .sv { width: 18px; height: 18px; }
.st-model { width: 29px; }
.st-w { width: 26px; }
.on { background: #5d86b8; }
.st-g2 { margin-left: 2px; }
.st-g3 { margin-left: 3px; }
.st-g4 { margin-left: 4px; }
.st-scale { width: 25px; color: #c8ccd3; font-size: 11px; }
.st-plus { font-size: 24px; color: #dfe2e6; width: 26px; }
.status .tri { margin: 0 5px; }

.taskbar { flex: 1; display: flex; align-items: center; background: linear-gradient(90deg, #dde6f6, #e7ecfa 45%, #ebeefb); }
.tk { width: 24px; height: 24px; }
.taskbar > .tk { margin: 0 8px 0 -1px; }
.tk-i { position: relative; width: 44px; height: 48px; display: flex; align-items: center; justify-content: center; flex: none; }
.tk-i::after { content: ""; position: absolute; bottom: 5px; left: 19px; width: 6px; height: 2px; border-radius: 1px; background: #7d8694; }
.pink { background: linear-gradient(#fbe3e6, #fbe3e6) 50% 100% / 40px 43px no-repeat; }
.pink::after { background: #b23a44; }
.active { background: linear-gradient(#f2f4fb, #f2f4fb) 50% 5px / 38px 38px no-repeat; }
.active::after { left: 12px; width: 20px; height: 3px; background: #2670b8; }
.tray { margin-left: auto; display: flex; align-items: center; height: 24px; padding-right: 13px; }
.tr { width: 18px; height: 18px; }
.t2, .t3 { margin-left: 6px; }
.t4 { margin-left: 7px; }
.t5 { margin-left: 9px; }
.tr-t { margin: 0 21px 0 16px; font-size: 14px; color: #666; width: 16px; }
.t8 { margin-left: 21px; }
.t9 { margin-left: 3px; }
.t10 { margin-left: 8px; }

.palette { position: absolute; left: 0; top: 107px; width: 288px; height: 503px; display: flex; }
.pal-strip { position: relative; width: 13px; height: 500px; background: #2b3748; color: #c8ccd3; overflow: hidden; flex: none; }
.pal-x { position: absolute; left: -3px; top: 4px; font-size: 12px; line-height: 14px; }
.pal-a { position: absolute; left: -2px; top: 21px; font-size: 8px; line-height: 14px; }
.pal-d { position: absolute; left: -3px; top: 41px; font-size: 9px; line-height: 14px; }
.pal-title { position: absolute; left: -5px; top: 338px; writing-mode: vertical-rl; text-orientation: sideways; rotate: 180deg; font-size: 13px; letter-spacing: 1.5px; line-height: 12px; white-space: nowrap; color: #9ea5b2; }
.pal-logo { position: absolute; left: -6px; top: 485px; width: 14px; height: 14px; }
.pal-body { width: 253px; height: 503px; background: #f3f1f6; border-top: 5px solid #3a4150; border-right: 4px solid #3a4150; border-bottom: 3px solid #3a4150; display: flex; flex-direction: column; box-shadow: 1px 1px 0 #1a1f29; }
.pal-rows { position: relative; height: 291px; padding-top: 1px; background: #f7f5f9; border-bottom: 1px solid #a7a7ad; }
.r { height: 19px; width: 232px; display: grid; grid-template-columns: 25px 89px 1fr; align-items: center; background: #fff; font-size: 12px; color: #4a4a4e; border-bottom: 1px solid #f5f3f7; }
.r b { color: #111; font-weight: 700; font-size: 12px; font-family: "Noto Sans", "Noto Sans CJK SC", sans-serif; }
.grp { background: #f3f1f6; display: flex; }
.grp b { margin-left: 9px; }
.ex { width: 10px; height: 6px; margin-left: 5px; }
.ex2 { color: #888; text-align: center; font-size: 18px; line-height: 14px; padding: 0 6px 3px 0; }
.sel span:nth-child(2) { background: #f3f1f6; margin-left: -4px; padding-left: 4px; }
.pal-scroll { position: absolute; left: 239px; top: 18px; width: 2px; height: 164px; background: #9b9ba1; }
.pal-desc { height: 57px; padding: 0 6px; color: #111; font-size: 12px; border-bottom: 1px solid #a7a7ad; line-height: 18px; }
.pal-ctl { flex: 1; padding: 7px 0 0 4px; position: relative; }
.ctl-box { width: 231px; height: 25px; border: 1px solid #555a63; display: flex; align-items: flex-start; padding: 3px 0 0 4px; overflow: hidden; }
.btn { display: flex; align-items: center; justify-content: center; font: 12px "Noto Sans CJK SC", sans-serif; color: #222; background: #fcfbfd; border: 1px solid #dfdde3; border-radius: 3px; padding: 0 0 2px; }
.b-draw { width: 73px; height: 17px; }
.sel-box { height: 24px; background: #fff; border: 1px solid #b9b9c0; border-radius: 2px; display: flex; align-items: center; padding: 0 6px 5px 3px; }
.sel-box em { font-style: normal; background: #0f6cbd; color: #cfe2f5; font-size: 12px; line-height: 16px; }
.s1 { width: 60px; margin-left: 7px; }
.s2 { width: 64px; margin-left: 7px; }
.btn-grid { display: grid; grid-template-columns: 57px 72px 81px; grid-auto-rows: 20px; column-gap: 7px; row-gap: 7px; margin: 9px 0 0 5px; }
.btn-grid .btn:nth-child(3n) { width: 72px; justify-self: end; }
.b-ico { width: 37px; }
.chk { display: flex; align-items: center; margin: 5px 0 0 159px; gap: 5px; color: #222; font-size: 12px; }
.chk i { width: 13px; height: 13px; border: 1px solid #555; border-radius: 3px; background: #f7f5f9; }
.pal-tabs { width: 22px; height: 478px; margin-top: 5px; flex: none; background: #253040; display: flex; flex-direction: column; border-radius: 0 0 3px 0; }
.pt { flex: 1; display: flex; align-items: center; justify-content: center; color: #b6bcc7; font-size: 12px; }
.pt span { writing-mode: vertical-rl; text-orientation: sideways; rotate: 180deg; }
.cur { background: #3a4656; color: #d6d9de; }

.dlg { position: absolute; left: 618px; top: 279px; width: 256px; height: 228px; border-radius: 8px; background: #f3f0f6; overflow: hidden; box-shadow: 0 0 2px rgba(0, 0, 0, .5); }
.dlg-title { height: 30px; background: #fbfafc; display: flex; align-items: center; padding: 0 0 1px 9px; color: #222; font-size: 12px; }
.dlg-logo { width: 15px; height: 16px; margin-right: 5px; }
.dlg-x { width: 11px; height: 11px; margin-left: auto; margin-right: 9px; }
.dlg-form { padding-top: 7px; display: flex; flex-direction: column; gap: 8px; }
.f { display: flex; height: 19px; align-items: center; }
.f label { width: 60px; padding: 0 0 2px 14px; color: #222; font-size: 12px; flex: none; white-space: nowrap; }
.f .lng { padding-left: 2px; }
.f .spread { display: flex; gap: 12px; }
.inp { width: 153px; height: 19px; background: #fff; border-bottom: 1px solid #8a8a8f; font: 10px/18px "DejaVu Sans Mono", monospace; color: #222; padding-left: 2px; }
.wide { width: 186px; }
.focus { border-bottom: 2px solid #1a5f9e; }
.dlg-btns { display: flex; gap: 23px; margin: 13px 0 0 15px; }
.dlg-btns .btn { width: 58px; height: 17px; }
.dlg-grip { position: absolute; right: 2px; bottom: 2px; width: 10px; height: 10px; background: radial-gradient(circle, #aaa 1px, transparent 1.500px) 0 0 / 3.300px 3.300px; }
.cursor { position: absolute; left: 98px; top: 31px; width: 28px; height: 28px; border-radius: 50%; background: rgba(60, 150, 60, .6); }

.live { position: absolute; left: 534px; top: 0; width: 160px; height: 39px; background: #fff; display: flex; align-items: center; padding-left: 22px; color: #222; font-size: 12px; box-shadow: 0 1px 2px rgba(0, 0, 0, .3); }
.dot { width: 6px; height: 6px; border-radius: 50%; background: #2bbd7e; margin-right: 5px; }
.up { width: 12px; height: 8px; margin-left: 14px; }
```
